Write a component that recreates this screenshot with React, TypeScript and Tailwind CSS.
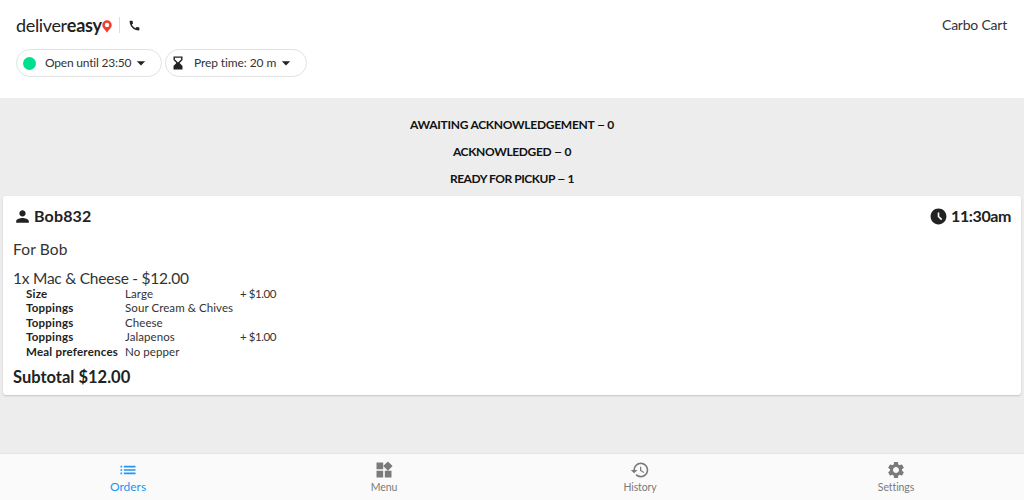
import type { ReactNode } from "react";
import { MdAccessTimeFilled, MdArrowDropDown, MdCall, MdHistory, MdList, MdPerson, MdSettings, MdWidgets } from "react-icons/md";

const statuses = [
  { label: "AWAITING ACKNOWLEDGEMENT", count: 0, tracking: "tracking-[-0.28px]" },
  { label: "ACKNOWLEDGED", count: 0, tracking: "tracking-[-0.35px]" },
  { label: "READY FOR PICKUP", count: 1, tracking: "tracking-[-0.45px]" },
];

const options = [
  { name: "Size", value: "Large", price: "+ $1.00" },
  { name: "Toppings", value: "Sour Cream & Chives" },
  { name: "Toppings", value: "Cheese" },
  { name: "Toppings", value: "Jalapenos", price: "+ $1.00" },
  { name: "Meal preferences", value: "No pepper" },
];

const tabs = [
  { label: "Orders", icon: MdList, active: true },
  { label: "Menu", icon: MdWidgets },
  { label: "History", icon: MdHistory },
  { label: "Settings", icon: MdSettings },
];

function Logo() {
  return (
    <div className="flex items-center text-[#222]">
      <span className="-mt-px w-[86px] text-[18px] leading-5 tracking-[-0.35px] whitespace-nowrap">
        deliver<span className="font-bold tracking-[-0.25px]">easy</span>
      </span>
      <svg viewBox="0 0 10 13" className="mt-[2px] h-[13px] w-[10px]">
        <path
          fill="#f23c2b"
          fillRule="evenodd"
          d="M5 .3A4.700 4.700 0 0 0 .3 5C.3 8.300 3.500 9.700 5 12.800 6.500 9.700 9.700 8.300 9.700 5A4.700 4.700 0 0 0 5 .3Zm0 2.500a2.200 2.200 0 1 1 0 4.400 2.200 2.200 0 0 1 0-4.400Z"
        />
      </svg>
    </div>
  );
}

function Hourglass() {
  return (
    <svg viewBox="0 0 10 14" className="h-[14px] w-[10px]" fill="#222">
      <path
        fillRule="evenodd"
        d="M.5.500h9v3.500L6.600 7l2.900 3v3.500h-9V10l2.900-3L.5 4Zm1.400 1.200v1.800L5 6.400l3.100-2.900V1.700Z"
      />
    </svg>
  );
}

function Pill({ icon, label, className }: { icon: ReactNode; label: string; className: string }) {
  return (
    <button className={`flex h-[28px] items-center rounded-full border border-[#e2e2e2] text-[12px] text-[#333] ${className}`}>
      {icon}
      <span className="whitespace-nowrap">{label}</span>
      <MdArrowDropDown className="size-5 shrink-0 text-[#222]" />
    </button>
  );
}

export default function App() {
  return (
    <div className="flex h-[500px] w-[1024px] flex-col overflow-hidden bg-[#ededed] font-['Lato',sans-serif] text-[#222] [font-variant-ligatures:none]">
      <header className="h-[98px] shrink-0 bg-white px-4 pt-[15px]">
        <div className="flex h-5 items-center">
          <Logo />
          <div className="ml-[7px] h-4 w-px bg-[#ddd]" />
          <MdCall className="ml-2 size-[13px]" />
          <span className="-mt-px mr-px ml-auto text-[14px] tracking-[-0.22px] text-[#333]">Carbo Cart</span>
        </div>
        <div className="mt-[14px] flex gap-[3px]">
          <Pill
            className="w-[146px] gap-x-[9px] pl-[6px] tracking-[-0.2px] [&>svg]:-ml-[9px]"
            label="Open until 23:50"
            icon={<span className="size-[13px] shrink-0 rounded-full bg-[#00df8e]" />}
          />
          <Pill
            className="w-[142px] gap-x-[11px] pl-[7px] tracking-[-0.1px] [&>svg:last-child]:-ml-[11px]"
            label="Prep time: 20 m"
            icon={<Hourglass />}
          />
        </div>
      </header>

      <main className="flex-1 px-[3px] pt-[13px]">
        {statuses.map((s) => (
          <h2 key={s.label} className={`h-[27px] text-center text-[12px] leading-[27px] font-bold text-[#111] ${s.tracking}`}>
            {s.label} <span className="inline-block w-2 scale-x-125">–</span> {s.count}
          </h2>
        ))}

        <article className="mt-1 h-[199px] rounded-[3px] bg-white px-[10px] shadow-[0_1px_2px_rgba(0,0,0,0.18)]">
          <div className="flex h-[40px] items-center text-[16px] font-bold">
            <MdPerson className="size-[19px]" />
            <span className="ml-[2px] tracking-[0.15px]">Bob832</span>
            <MdAccessTimeFilled className="ml-auto size-[19px]" />
            <span className="ml-[3px] tracking-[-0.4px]">11:30am</span>
          </div>
          <p className="mt-[2px] text-[15.500px] leading-[22px] tracking-[0.15px] text-[#333]">For Bob</p>
          <p className="mt-[7px] h-[20px] text-[15.500px] leading-[22px] tracking-[-0.24px] text-[#333]">
            1x Mac &amp; Cheese - $12.00
          </p>
          <dl className="pl-[13px] text-[11.500px] leading-[14.400px]">
            {options.map((o, i) => (
              <div key={i} className="flex">
                <dt className="w-[99px] font-bold tracking-[0.22px]">{o.name}</dt>
                <dd className="w-[115px] tracking-[0.08px] text-[#333]">{o.value}</dd>
                <dd className="tracking-[-0.45px] text-[#333]">{o.price}</dd>
              </div>
            ))}
          </dl>
          <p className="mt-[7px] text-[16.500px] leading-[22px] font-bold">Subtotal $12.00</p>
        </article>
      </main>

      <nav className="grid h-[46px] shrink-0 grid-cols-4 bg-[#fafafa] shadow-[0_-1px_1px_rgba(0,0,0,0.03)]">
        {tabs.map(({ label, icon: Icon, active }) => (
          <div key={label} className={`flex flex-col items-center pt-[6px] ${active ? "text-[#2196f3]" : "text-[#7a7a7a]"}`}>
            <Icon className="size-5" />
            <span className={active ? "text-[12px] leading-[13px]" : "text-[10.500px] leading-[14px] tracking-[-0.1px]"}>{label}</span>
          </div>
        ))}
      </nav>
    </div>
  );
}
